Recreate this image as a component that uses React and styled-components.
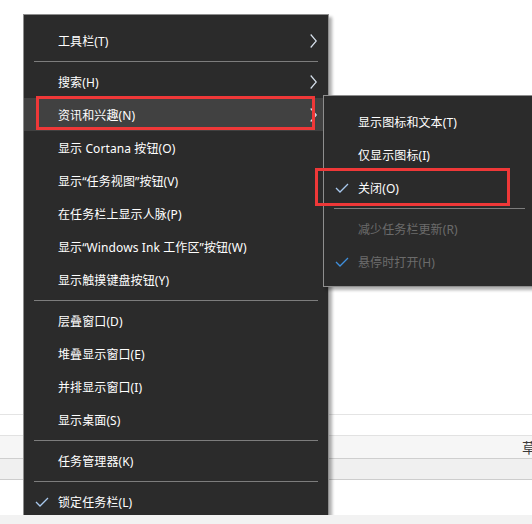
import React from "react";
import styled, { createGlobalStyle } from "styled-components";

const GlobalStyle = createGlobalStyle`
  html, body {
    margin: 0;
    padding: 0;
    background: #ffffff;
    overflow: hidden;
  }
  body {
    font-family: "Noto Sans", "Noto Sans CJK SC", sans-serif;
  }
`;

const Page = styled.div`
  width: 532px;
  height: 524px;
  display: flex;
  flex-direction: column;
`;

const Stage = styled.div`
  position: relative;
  height: 515px;
  overflow: hidden;
  display: flex;
  flex-direction: column;
`;

const BottomStrip = styled.div`
  height: 9px;
  background: #f2f2f2;
`;

/* window behind the menus */
const Blank = styled.div`
  height: ${(p) => p.h}px;
  background: #ffffff;
`;

const Band = styled.div`
  height: ${(p) => p.h}px;
  background: ${(p) => p.bg};
  border-top: 1px solid ${(p) => p.line};
  display: flex;
  align-items: center;
  justify-content: flex-end;
  font-family: "Noto Sans CJK SC", sans-serif;
  font-size: 14px;
  color: #3a3a3a;
  overflow: hidden;
  white-space: nowrap;
`;

const EdgeGlyph = styled.span`
  margin-right: -4px;
`;

/* menus */
const Menu = styled.div`
  position: absolute;
  left: ${(p) => p.x}px;
  top: ${(p) => p.y}px;
  width: ${(p) => p.w}px;
  background: #2b2b2b;
  border: 1px solid #8e8e8e;
  box-shadow: 3px 3px 3px rgba(0, 0, 0, 0.32);
  padding: 9px 0 8px;
  display: flex;
  flex-direction: column;
  font-size: 12px;
`;

const Item = styled.div`
  height: 33px;
  display: flex;
  align-items: center;
  padding: 0 11px 0 11px;
  background: ${(p) => (p.active ? "#414141" : "transparent")};
  color: ${(p) => (p.disabled ? "#6b6b6b" : "#ffffff")};
  white-space: nowrap;
`;

const CheckSlot = styled.span`
  width: 23px;
  flex: none;
  display: flex;
  align-items: center;
`;

const Label = styled.span`
  flex: 1;
  letter-spacing: 0.1px;
`;

const Separator = styled.div`
  height: 8px;
  margin: 0 10px;
  display: flex;
  align-items: center;
  &::after {
    content: "";
    flex: 1;
    height: 1px;
    background: #7d7d7d;
  }
`;

const Annotation = styled.div`
  position: absolute;
  left: ${(p) => p.x}px;
  top: ${(p) => p.y}px;
  width: ${(p) => p.w}px;
  height: ${(p) => p.h}px;
  border: 3px solid #ef3838;
  box-sizing: border-box;
  pointer-events: none;
`;

function Check({ dim }) {
  return (
    <svg width="14" height="10" viewBox="0 0 14 10">
      <polyline
        points="1,5 5,9 13,1"
        fill="none"
        stroke={dim ? "#3f8fdc" : "#a9c9ee"}
        strokeWidth="1.3"
      />
    </svg>
  );
}

function Chevron() {
  return (
    <svg width="7" height="14" viewBox="0 0 7 14">
      <polyline
        points="0.7,0.5 6.3,7 0.7,13.5"
        fill="none"
        stroke="#d8e2ee"
        strokeWidth="1.2"
      />
    </svg>
  );
}

function MenuItem({ label, check, chevron, disabled, active }) {
  return (
    <Item disabled={disabled} active={active}>
      <CheckSlot>{check && <Check dim={disabled} />}</CheckSlot>
      <Label>{label}</Label>
      {chevron && <Chevron />}
    </Item>
  );
}

const mainItems = [
  { label: "工具栏(T)", chevron: true },
  "sep",
  { label: "搜索(H)", chevron: true },
  { label: "资讯和兴趣(N)", chevron: true, active: true },
  { label: "显示 Cortana 按钮(O)" },
  { label: "显示“任务视图”按钮(V)" },
  { label: "在任务栏上显示人脉(P)" },
  { label: "显示“Windows Ink 工作区”按钮(W)" },
  { label: "显示触摸键盘按钮(Y)" },
  "sep",
  { label: "层叠窗口(D)" },
  { label: "堆叠显示窗口(E)" },
  { label: "并排显示窗口(I)" },
  { label: "显示桌面(S)" },
  "sep",
  { label: "任务管理器(K)" },
  "sep",
  { label: "锁定任务栏(L)", check: true },
];

const subItems = [
  { label: "显示图标和文本(T)" },
  { label: "仅显示图标(I)" },
  { label: "关闭(O)", check: true },
  "sep",
  { label: "减少任务栏更新(R)", disabled: true },
  { label: "悬停时打开(H)", disabled: true, check: true },
];

function renderItems(items) {
  return items.map((it, i) =>
    it === "sep" ? <Separator key={i} /> : <MenuItem key={i} {...it} />
  );
}

export default function App() {
  return (
    <Page>
      <GlobalStyle />
      <Stage>
        <Blank h={415} />
        <Band h={20} bg="#ffffff" line="#e4e4e4" />
        <Band h={22} bg="#f6f6f6" line="#e2e2e2">
          <EdgeGlyph>草</EdgeGlyph>
        </Band>
        <Band h={20} bg="#f0f0f0" line="#cfcfcf" />
        <Band h={35} bg="#ffffff" line="#cdcdcd" />

        <Menu x={23} y={14} w={304}>
          {renderItems(mainItems)}
        </Menu>
        <Menu x={323} y={95} w={211}>
          {renderItems(subItems)}
        </Menu>

        <Annotation x={36} y={96} w={279} h={34} />
        <Annotation x={315} y={168} w={195} h={38} />
      </Stage>
      <BottomStrip />
    </Page>
  );
}
